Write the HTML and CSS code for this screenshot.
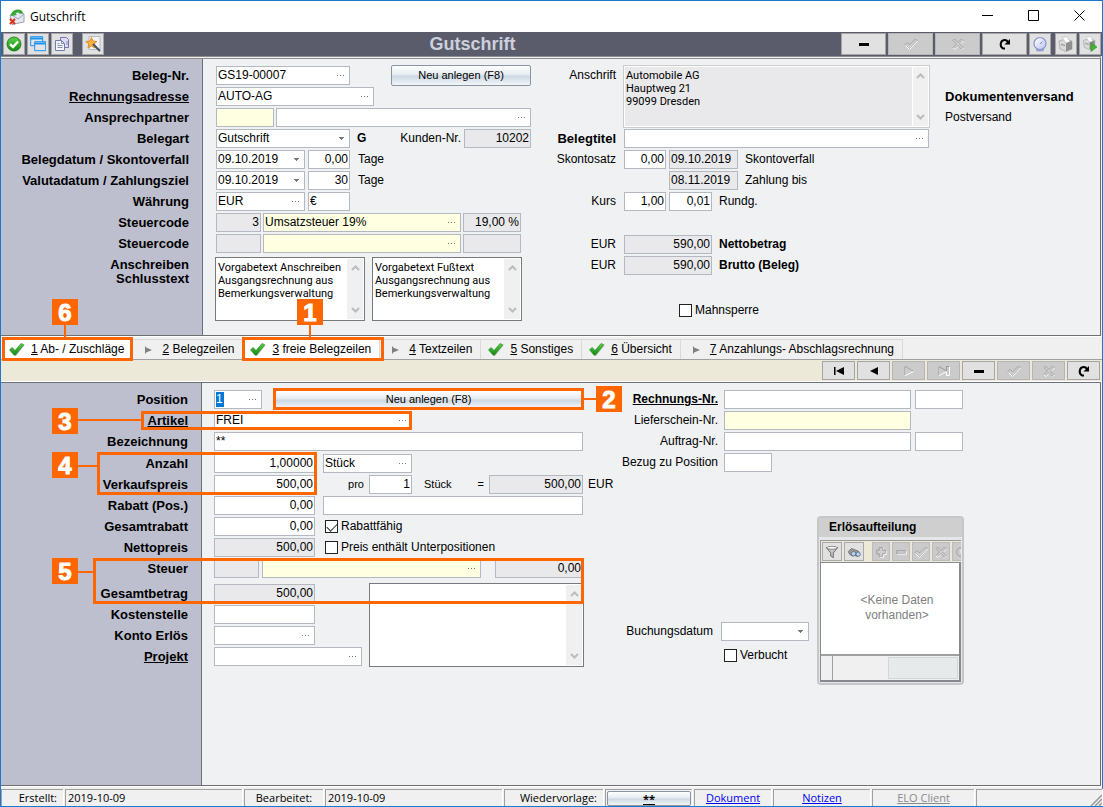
FILE: index.html
```html
<!DOCTYPE html>
<html lang="de">
<head>
<meta charset="utf-8">
<title>Gutschrift</title>
<link rel="stylesheet" href="styles.css">
</head>
<body>
<svg class="sprite" aria-hidden="true">
  <defs>
    <linearGradient id="green" x1="0" y1="0" x2="0" y2="1"><stop offset="0" stop-color="#5fd04a"/><stop offset="1" stop-color="#128a12"/></linearGradient>
    <linearGradient id="sky" x1="0" y1="0" x2="1" y2="1"><stop offset="0" stop-color="#ffffff"/><stop offset="1" stop-color="#b9c3ee"/></linearGradient>
    <symbol id="dots" viewBox="0 0 8 2"><path d="M0 0h1v1H0zM3 0h1v1H3zM6 0h1v1H6z" fill="#777"/></symbol>
    <symbol id="caret" viewBox="0 0 6 4"><path d="M0 0h5v1H4v1H3v1H2V2H1V1H0z" fill="#777"/></symbol>
    <symbol id="up" viewBox="0 0 9 6"><path d="M1 5 4.500 1.500 8 5" fill="none" stroke="#bcbcbc" stroke-width="2"/></symbol>
    <symbol id="down" viewBox="0 0 9 6"><path d="M1 1 4.500 4.500 8 1" fill="none" stroke="#bcbcbc" stroke-width="2"/></symbol>
    <symbol id="tick" viewBox="0 0 16 14"><path d="M1 7.500 3.500 5.200 6.200 8.300 12.500 1 15.500 2.500 7 13 5.500 13z" fill="#888" opacity=".5"/><path d="M.5 6.800 3.200 4.500 6 7.600 12 .5 14.800 1.700 6.500 12 5 12z" fill="url(#green)" stroke="#1b8a1b" stroke-width=".6"/></symbol>
    <symbol id="play" viewBox="0 0 16 14"><path d="M5 4l7 3-7 3z" fill="#808080"/><path d="M5.500 3.500v7" stroke="#808080"/></symbol>
    <symbol id="minus" viewBox="0 0 16 12"><path d="M3 5h10v3H3z"/></symbol>
    <symbol id="ok" viewBox="0 0 16 12"><path d="M2 6.500 4 4.500 6.500 7 12.500 1 14 2.500 6.500 11z" fill="#d0d0d0" stroke="#999" stroke-width=".8"/><path d="M2.500 7.500 6.500 11.500 14.500 3" fill="none" stroke="#fff"/></symbol>
    <symbol id="cross" viewBox="0 0 16 12"><path d="M3 2.500 4.500 1 8 4.500 11.500 1 13 2.500 9.500 6 13 9.500 11.500 11 8 7.500 4.500 11 3 9.500 6.500 6z" fill="#d0d0d0" stroke="#999" stroke-width=".8"/><path d="M13.500 3 10.500 6M13.500 10 12 11.500M8 8.500 5 11.500 3 10" fill="none" stroke="#fff"/></symbol>
    <symbol id="redo" viewBox="0 0 16 12"><path d="M8 10.500H6C2.500 8.500 3 2.500 7.500 2c1.500-.1 2.700.7 3.500 2" fill="none" stroke="#000" stroke-width="2"/><path d="M13 1v5.500H7.500z"/></symbol>
    <symbol id="first" viewBox="0 0 16 12"><path d="M3 2h1.500v8H3zM13 2v8L5 6z"/></symbol>
    <symbol id="prev" viewBox="0 0 16 12"><path d="M12 2v8L4 6z"/></symbol>
    <symbol id="next" viewBox="0 0 16 12"><path d="M4.500 2v8.500L13 6.200z" fill="none" stroke="#fff"/><path d="M4 10V1.500L12.500 6" fill="none" stroke="#999"/></symbol>
    <symbol id="last" viewBox="0 0 16 12"><path d="M3.500 2v8.500L10.500 6.500V10.500H13.500V2" fill="none" stroke="#fff"/><path d="M3 10V1.500L10.500 6V1.500H13" fill="none" stroke="#999"/></symbol>
    <symbol id="printer" viewBox="0 0 16 16"><path d="M1 5 8 3l6 2v8l-6 2.500L2 13z" fill="#d9d9d9" stroke="#999" stroke-width=".6"/><path d="M8 6.500 14 5v8l-6 2.500z" fill="#8f8f8f"/><path d="M4 1.500 9 .5l3 5-4 1.500z" fill="#fff" stroke="#aaa" stroke-width=".5"/><path d="M3 8.500l4 1" stroke="#888"/></symbol>
  </defs>
</svg>

<main class="window">
  <header class="titlebar">
    <svg class="app-icon" viewBox="0 0 16 16"><path d="M1 6 8 2l7 3v8l-12 2.500z" fill="#e4e6f2" stroke="#8c8fa3" stroke-width=".8"/><path d="M3 6 9 10 15 5" fill="none" stroke="#8c8fa3" stroke-width=".8"/><path d="M2 7C2 3 5 .5 9 .5c3 0 4.500 1.500 5 3.500l-3 1C10 3 8 3 6.500 4.500L8 6z" fill="#35a835"/><path d="M1 10l5 5M6 10l-5 5" stroke="#d8341c" stroke-width="2.200"/></svg>
    <h1 class="caption">Gutschrift</h1>
    <div class="window-buttons">
      <button aria-label="Minimieren"><svg viewBox="0 0 11 11"><path d="M0 5.500h11" stroke="#000"/></svg></button>
      <button aria-label="Maximieren"><svg viewBox="0 0 11 11"><path d="M.5.500h10v10H.5z" fill="none" stroke="#000"/></svg></button>
      <button aria-label="Schließen"><svg viewBox="0 0 11 11"><path d="M.5.500l10 10M10.500.500l-10 10" stroke="#000"/></svg></button>
    </div>
  </header>

  <div class="toolbar">
    <button class="tool" aria-label="OK"><svg viewBox="0 0 16 16"><circle cx="8" cy="8" r="7" fill="url(#green)" stroke="#147014" stroke-width=".8"/><path d="M4 8.200 7 11 12 5.500" fill="none" stroke="#fff" stroke-width="2.400"/></svg></button>
    <button class="tool" aria-label="Fenster"><svg viewBox="0 0 16 16"><path d="M.7.700h12v9H.7z" fill="#e4e4e6" stroke="#1b93f0"/><path d="M.5 2.500h12" stroke="#1b93f0" stroke-width="2"/><path d="M4.700 5.700h11v9h-11z" fill="#e4e4e6" stroke="#1b93f0"/><path d="M4.500 7.500h11" stroke="#1b93f0" stroke-width="2"/></svg></button>
    <button class="tool" aria-label="Kopieren"><svg viewBox="0 0 16 16"><path d="M6.500 1.500h6l2 2v8h-8z" fill="#dcdcf6" stroke="#7d72ab"/><path d="M1.500 4.500h6l3 3v7h-9z" fill="#f3f5fc" stroke="#727da4"/><path d="M7.500 4.500v3h3M3.500 9.500h5M3.500 11.500h5M3.500 7.500h2M12 6h2M12 8h2" fill="none" stroke="#8590b5"/></svg></button>
    <button class="tool wizard" aria-label="Assistent"><svg viewBox="0 0 16 16"><path d="M4 .5h11v13H4z" fill="#f2f3f5" stroke="#b4bac4"/><path d="M6.500 1.500 8 5l4 .500-3 2.500.8 4L6.500 10 3 12l.8-4L.8 5.500 5 5z" fill="#f7b23b" stroke="#d9821a" stroke-width=".8"/><path d="M8 8l7 7" stroke="#45576b" stroke-width="2.200"/></svg></button>
    <div class="heading">Gutschrift</div>
    <button class="tool wide" aria-label="Löschen"><svg class="glyph"><use href="#minus"/></svg></button>
    <button class="tool wide off" disabled aria-label="Speichern"><svg class="glyph"><use href="#ok"/></svg></button>
    <button class="tool wide off" disabled aria-label="Verwerfen"><svg class="glyph"><use href="#cross"/></svg></button>
    <button class="tool wide" aria-label="Aktualisieren"><svg class="glyph"><use href="#redo"/></svg></button>
    <button class="tool" aria-label="Verlauf"><svg viewBox="0 0 16 16"><ellipse cx="8" cy="14" rx="4" ry="1.500" fill="#9aa3d0"/><circle cx="8" cy="7.500" r="6" fill="url(#sky)" stroke="#8b93cc" stroke-width="1.200"/><path d="M8 8 10.500 5.500" fill="none" stroke="#6670a8" stroke-width=".8"/></svg></button>
    <button class="tool print" aria-label="Drucken"><svg><use href="#printer"/></svg></button>
    <button class="tool" aria-label="Druck starten"><svg viewBox="0 0 16 16"><use href="#printer" width="15" height="14"/><path d="M9 7l6 4-6 4.500z" fill="#43b532" stroke="#2b8b20" stroke-width=".6"/></svg></button>
  </div>

  <section class="panel">
    <div class="labels">
      <label for="nr">Beleg-Nr.</label>
      <label for="adr"><a href="#adr">Rechnungsadresse</a></label>
      <label for="asp">Ansprechpartner</label>
      <label for="art">Belegart</label>
      <label for="bdat">Belegdatum / Skontoverfall</label>
      <label for="vdat">Valutadatum / Zahlungsziel</label>
      <label for="cur">Währung</label>
      <label for="st1">Steuercode</label>
      <label for="st2">Steuercode</label>
      <div class="double"><label for="memo1">Anschreiben</label><label for="memo2">Schlusstext</label></div>
    </div>
    <div class="content upper">
      <div class="rows voucher">
        <div class="row"><span class="field w133"><input id="nr" value="GS19-00007"><button aria-label="Suchen"><svg><use href="#dots"/></svg></button></span><button class="action end">Neu anlegen (F8)</button></div>
        <div class="row"><span class="field w158"><input id="adr" value="AUTO-AG"><button aria-label="Suchen"><svg><use href="#dots"/></svg></button></span></div>
        <div class="row g2"><span class="field w58 hint"><input id="asp"></span><span class="field grow"><input aria-label="Name"><button aria-label="Suchen"><svg><use href="#dots"/></svg></button></span></div>
        <div class="row g7"><span class="field w133"><select id="art"><option>Gutschrift</option></select><svg><use href="#caret"/></svg></span><b>G</b><label class="end" for="kd">Kunden-Nr.</label><span class="field w67 locked"><input id="kd" class="num" value="10202" readonly></span></div>
        <div class="row g3"><span class="field w89"><select id="bdat"><option>09.10.2019</option></select><svg><use href="#caret"/></svg></span><span class="field w42"><input id="bt" class="num" value="0,00"></span><label class="after" for="bt">Tage</label></div>
        <div class="row g3"><span class="field w89"><select id="vdat"><option>09.10.2019</option></select><svg><use href="#caret"/></svg></span><span class="field w42"><input id="vt" class="num" value="30"></span><label class="after" for="vt">Tage</label></div>
        <div class="row g3"><span class="field w89"><input id="cur" value="EUR"><button aria-label="Suchen"><svg><use href="#dots"/></svg></button></span><span class="field w42"><input aria-label="Symbol" value="€"></span></div>
        <div class="row g2"><span class="field w45 locked"><input id="st1" class="num" value="3" readonly></span><span class="field w198 hint"><input aria-label="Steuer" value="Umsatzsteuer 19%"><button aria-label="Suchen"><svg><use href="#dots"/></svg></button></span><span class="field w58 locked"><input aria-label="Satz" class="num" value="19,00 %" readonly></span></div>
        <div class="row g2"><span class="field w45 locked"><input id="st2" class="num" readonly></span><span class="field w198 hint"><input aria-label="Steuer"><button aria-label="Suchen"><svg><use href="#dots"/></svg></button></span><span class="field w58 locked"><input aria-label="Satz" readonly></span></div>
        <div class="memos">
          <div class="memo"><textarea id="memo1">Vorgabetext Anschreiben
Ausgangsrechnung aus
Bemerkungsverwaltung</textarea><div class="scroll"><svg><use href="#up"/></svg><svg><use href="#down"/></svg></div></div>
          <div class="memo"><textarea id="memo2">Vorgabetext Fußtext
Ausgangsrechnung aus
Bemerkungsverwaltung</textarea><div class="scroll"><svg><use href="#up"/></svg><svg><use href="#down"/></svg></div></div>
        </div>
      </div>
      <div class="rows totals">
        <div class="row address"><label class="lead" for="an">Anschrift</label><div class="memo locked"><textarea id="an" readonly>Automobile AG
Hauptweg 21
99099 Dresden</textarea><div class="scroll"><svg><use href="#up"/></svg><svg><use href="#down"/></svg></div></div></div>
        <div class="row"><label class="lead strong" for="bti">Belegtitel</label><span class="field grow"><input id="bti"><button aria-label="Suchen"><svg><use href="#dots"/></svg></button></span></div>
        <div class="row"><label class="lead" for="sk">Skontosatz</label><span class="field w42"><input id="sk" class="num" value="0,00"></span><span class="field w69 locked n3"><input id="skd" value="09.10.2019" readonly></span><label class="after" for="skd">Skontoverfall</label></div>
        <div class="row"><span class="lead"></span><span class="w42"></span><span class="field w69 locked n3"><input id="zb" value="08.11.2019" readonly></span><label class="after" for="zb">Zahlung bis</label></div>
        <div class="row"><label class="lead" for="ku">Kurs</label><span class="field w42"><input id="ku" class="num" value="1,00"></span><span class="field w43 n3"><input id="ru" class="num" value="0,01"></span><label class="after" for="ru">Rundg.</label></div>
        <div class="row far"><span class="lead">EUR</span><span class="field w88 locked"><input id="nb" class="num" value="590,00" readonly></span><label class="after bold" for="nb">Nettobetrag</label></div>
        <div class="row"><span class="lead">EUR</span><span class="field w88 locked"><input id="bb" class="num" value="590,00" readonly></span><label class="after bold" for="bb">Brutto (Beleg)</label></div>
        <div class="row dunning"><input type="checkbox" id="ms"><label for="ms">Mahnsperre</label></div>
      </div>
      <div class="rows dispatch">
        <div class="row strong">Dokumentenversand</div>
        <div class="row">Postversand</div>
      </div>
    </div>
  </section>

  <nav class="tabs">
    <button class="tab current"><svg><use href="#tick"/></svg><span><u>1</u> Ab- / Zuschläge</span></button>
    <button class="tab"><svg><use href="#play"/></svg><span><u>2</u> Belegzeilen</span></button>
    <button class="tab current"><svg><use href="#tick"/></svg><span><u>3</u> freie Belegzeilen</span></button>
    <button class="tab"><svg><use href="#play"/></svg><span><u>4</u> Textzeilen</span></button>
    <button class="tab"><svg><use href="#tick"/></svg><span><u>5</u> Sonstiges</span></button>
    <button class="tab"><svg><use href="#tick"/></svg><span><u>6</u> Übersicht</span></button>
    <button class="tab"><svg><use href="#play"/></svg><span><u>7</u> Anzahlungs- Abschlagsrechnung</span></button>
  </nav>
  <div class="navigator">
    <button class="tool" aria-label="Erster"><svg class="glyph"><use href="#first"/></svg></button>
    <button class="tool" aria-label="Voriger"><svg class="glyph"><use href="#prev"/></svg></button>
    <button class="tool off" disabled aria-label="Nächster"><svg class="glyph"><use href="#next"/></svg></button>
    <button class="tool off" disabled aria-label="Letzter"><svg class="glyph"><use href="#last"/></svg></button>
    <button class="tool" aria-label="Löschen"><svg class="glyph"><use href="#minus"/></svg></button>
    <button class="tool off" disabled aria-label="Speichern"><svg class="glyph"><use href="#ok"/></svg></button>
    <button class="tool off" disabled aria-label="Verwerfen"><svg class="glyph"><use href="#cross"/></svg></button>
    <button class="tool" aria-label="Aktualisieren"><svg class="glyph"><use href="#redo"/></svg></button>
  </div>

  <section class="panel lines">
    <div class="labels">
      <label for="pos">Position</label>
      <label for="arti"><a href="#arti">Artikel</a></label>
      <label for="bez">Bezeichnung</label>
      <label class="s1" for="anz">Anzahl</label>
      <label for="vk">Verkaufspreis</label>
      <label for="rab">Rabatt (Pos.)</label>
      <label for="ges">Gesamtrabatt</label>
      <label for="net">Nettopreis</label>
      <label for="steu">Steuer</label>
      <label class="s4" for="gb">Gesamtbetrag</label>
      <label for="ks">Kostenstelle</label>
      <label for="ke">Konto Erlös</label>
      <label for="pj"><a href="#pj">Projekt</a></label>
    </div>
    <div class="content lower">
      <div class="rows item">
        <div class="row"><span class="field w48"><input id="pos" class="picked" value="1"><button aria-label="Suchen"><svg><use href="#dots"/></svg></button></span><button class="action long">Neu anlegen (F8)</button></div>
        <div class="row"><span class="field w198"><input id="arti" value="FREI"><button aria-label="Suchen"><svg><use href="#dots"/></svg></button></span></div>
        <div class="row"><span class="field w369"><input id="bez" value="**"></span></div>
        <div class="row g8 s1"><span class="field w101"><input id="anz" class="num" value="1,00000"></span><span class="field w89"><input aria-label="Einheit" value="Stück"><button aria-label="Suchen"><svg><use href="#dots"/></svg></button></span></div>
        <div class="row"><span class="field w101"><input id="vk" class="num" value="500,00"></span><label class="per" for="pro">pro</label><span class="field w43"><input id="pro" class="num" value="1"></span><span class="unit"><span>Stück</span><span>=</span></span><span class="field w94 locked"><input aria-label="Summe" class="num" value="500,00" readonly></span><span class="currency">EUR</span></div>
        <div class="row g8"><span class="field w101"><input id="rab" class="num" value="0,00"></span><span class="field w260"><input aria-label="Rabatttext"></span></div>
        <div class="row g3"><span class="field w101"><input id="ges" class="num" value="0,00"></span><input type="checkbox" class="indent" id="rf" checked><label for="rf">Rabattfähig</label></div>
        <div class="row g3"><span class="field w101 locked"><input id="net" class="num" value="500,00" readonly></span><input type="checkbox" class="indent" id="pu"><label for="pu">Preis enthält Unterpositionen</label></div>
        <div class="row g3 w369"><span class="field w45 locked"><input id="steu" readonly></span><span class="field w219 hint"><input aria-label="Steuertext"><button aria-label="Suchen"><svg><use href="#dots"/></svg></button></span><span class="field w88 locked end"><input aria-label="Steuerbetrag" class="num" value="0,00" readonly></span></div>
        <div class="closing s4">
          <div class="rows">
            <div class="row"><span class="field w101 locked"><input id="gb" class="num" value="500,00" readonly></span></div>
            <div class="row"><span class="field w101"><input id="ks"></span></div>
            <div class="row"><span class="field w101"><input id="ke"><button aria-label="Suchen"><svg><use href="#dots"/></svg></button></span></div>
            <div class="row"><span class="field w148"><input id="pj"><button aria-label="Suchen"><svg><use href="#dots"/></svg></button></span></div>
          </div>
          <div class="memo"><textarea aria-label="Bemerkung"></textarea><div class="scroll"><svg><use href="#up"/></svg><svg><use href="#down"/></svg></div></div>
        </div>
      </div>
      <div class="rows refs">
        <div class="row"><label class="lead bold" for="rn"><a href="#rn">Rechnungs-Nr.</a></label><span class="field w187"><input id="rn"></span><span class="field w48"><input aria-label="Position"></span></div>
        <div class="row"><label class="lead" for="ln">Lieferschein-Nr.</label><span class="field w187 hint"><input id="ln"></span></div>
        <div class="row"><label class="lead" for="an2">Auftrag-Nr.</label><span class="field w187"><input id="an2"></span><span class="field w48"><input aria-label="Position"></span></div>
        <div class="row"><label class="lead" for="bp">Bezug zu Position</label><span class="field w48"><input id="bp"></span></div>
        <div class="booking">
          <div class="posted">
            <div class="row g8"><label class="end" for="bd">Buchungsdatum</label><span class="field w88"><select id="bd"><option></option></select><svg><use href="#caret"/></svg></span></div>
            <div class="row g3"><input type="checkbox" id="vb"><label for="vb">Verbucht</label></div>
          </div>
          <section class="split">
            <h2>Erlösaufteilung</h2>
            <div class="split-tools">
              <button class="mini" aria-label="Filter"><svg viewBox="0 0 16 16"><path d="M1.500 3h13L9.500 9v5.500l-3-2V9z" fill="#c4c4c4" stroke="#555" stroke-width=".9"/><ellipse cx="8" cy="3.200" rx="6" ry="1.600" fill="#fff" stroke="#666" stroke-width=".8"/></svg></button>
              <button class="mini" aria-label="Suchen"><svg viewBox="0 0 16 16"><path d="M1.500 7.500 5 4l8 3 2 4-3 2-3-1-3 .5-3-2z" fill="#9a9a9a" stroke="#555" stroke-width=".8"/><circle cx="7.500" cy="10" r="2.500" fill="#b5d9f5" stroke="#456" stroke-width=".7"/><circle cx="12.800" cy="10.500" r="2.400" fill="#b5d9f5" stroke="#456" stroke-width=".7"/></svg></button>
              <button class="mini off first" disabled aria-label="Neu"><svg viewBox="0 0 16 16"><path d="M6 3h4v3h3v4h-3v3H6v-3H3V6h3z" fill="#d0d0d0" stroke="#999"/><path d="M11 3v2M14 7v4h-3v3H7" fill="none" stroke="#fff"/></svg></button>
              <button class="mini off" disabled aria-label="Löschen"><svg viewBox="0 0 16 16"><path d="M3 6.500h10v3H3z" fill="#d0d0d0" stroke="#999"/><path d="M14 7v3.500H4" fill="none" stroke="#fff"/></svg></button>
              <button class="mini off" disabled aria-label="Speichern"><svg><use href="#ok"/></svg></button>
              <button class="mini off" disabled aria-label="Verwerfen"><svg><use href="#cross"/></svg></button>
              <button class="mini off" disabled aria-label="Aktualisieren"><svg viewBox="0 0 16 16"><circle cx="8" cy="8" r="5" fill="none" stroke="#999"/><path d="M8 5v4h3" fill="none" stroke="#fff"/></svg></button>
            </div>
            <div class="split-body"><p>&lt;Keine Daten vorhanden&gt;</p><div class="split-foot"><span></span><i></i></div></div>
          </section>
        </div>
      </div>
    </div>
  </section>

  <footer class="status">
    <span class="cell c62 right">Erstellt:</span>
    <span class="cell c177">2019-10-09</span>
    <span class="cell c79 mid">Bearbeitet:</span>
    <span class="cell c177">2019-10-09</span>
    <span class="cell c99 right">Wiedervorlage:</span>
    <span class="cell c87 press"><button class="action"><u>**</u></button></span>
    <span class="cell c77 mid"><a href="#dokument">Dokument</a></span>
    <span class="cell c97 mid"><a href="#notizen">Notizen</a></span>
    <span class="cell c102 mid"><a class="dim" href="#elo">ELO Client</a></span>
    <span class="cell rest"><svg viewBox="0 0 12 12"><path d="M1 12 12 1M5 12l7-7M9 12l3-3" stroke="#999" stroke-width="1.500"/></svg></span>
  </footer>

  <div class="frame f6"></div><div class="stem v s6"></div><div class="badge b6">6</div>
  <div class="frame f1"></div><div class="stem v s-1"></div><div class="badge b1">1</div>
  <div class="frame f2"></div><div class="stem h s-2"></div><div class="badge b2">2</div>
  <div class="frame f3"></div><div class="stem h s-3"></div><div class="badge b3">3</div>
  <div class="frame f4"></div><div class="stem h s-4"></div><div class="badge b4">4</div>
  <div class="frame f5"></div><div class="stem h s-5"></div><div class="badge b5">5</div>
</main>
</body>
</html>
```
FILE: styles.css
```css
* { box-sizing: border-box; }
body { margin: 0; background: #f0f0f0; color: #000; font: 12px/19px "Liberation Sans", Arial, sans-serif; }
button, input, select, textarea { font: inherit; color: inherit; margin: 0; }
button { padding: 0; }
a { color: inherit; }
.sprite { position: absolute; width: 0; height: 0; }

.window { position: relative; display: flex; flex-direction: column; min-height: 100vh; min-width: 1103px; border: 1px solid #1979ca; background: #f0f0f0; }

/* title bar */
.titlebar { display: flex; align-items: center; height: 31px; padding: 0 17px 0 8px; background: #fff; }
.app-icon { width: 16px; height: 16px; }
.caption { flex: 1; margin: 0 0 0 5px; font: 12px/16px "Open Sans", sans-serif; }
.window-buttons { display: flex; gap: 35px; padding-bottom: 2px; }
.window-buttons button { display: flex; border: 0; background: none; }
.window-buttons svg { width: 11px; height: 11px; }

/* toolbars */
.toolbar { display: flex; align-items: center; gap: 2px; height: 24px; padding: 0 1px 0 2px; background: #5a5c6c; }
.tool { display: flex; align-items: center; justify-content: center; flex: none; width: 22px; height: 22px; border: 1px solid #a5a5a5; background: #e1e1e1; }
.tool svg { width: 16px; height: 16px; }
.tool .glyph { width: 16px; height: 12px; }
.tool.wide { width: 45px; }
.tool.off { background: #cbcbcb; border-color: #b5b5b5; }
.wizard { margin-left: 7px; }
.print { margin-left: 2px; }
.heading { flex: 1; text-align: center; color: #ccd0dc; font-weight: bold; font-size: 18px; }
.navigator { display: flex; justify-content: flex-end; gap: 2px; height: 22px; padding: 1px 2px; background: #ece9d8; border-bottom: 1px solid #fff; }
.navigator .tool { width: 33px; height: 19px; }

/* panels */
.panel { display: flex; margin-right: 1px; border-right: 1px solid #6d6f73; border-bottom: 1px solid #6d6f73; background: #eff1f3; border-top: 3px double #8d8d8d; }
.panel.lines { flex: 1; border-top: 1px solid #6d7078; }
.labels { display: flex; flex-direction: column; gap: 2px; width: 202px; flex: none; padding: 7px 13px 0 0; background: #bdbfce; border-right: 1px solid #6d6f73; text-align: right; font-weight: bold; font-size: 13px; }
.lines .labels { width: 201px; }
.double { display: flex; flex-direction: column; margin-top: 3px; line-height: 14px; }
.content { display: flex; flex: 1; align-items: flex-start; }
.upper { padding: 7px 0 15px 13px; }
.lower { padding: 7px 0 15px 12px; }
.rows { display: flex; flex-direction: column; gap: 2px; }
.row { display: flex; align-items: center; height: 19px; white-space: nowrap; }
.voucher { width: 315px; flex: none; }
.totals { width: 387px; margin-left: 11px; flex: none; }
.dispatch { margin: 21px 0 0 16px; }
.item { width: 403px; flex: none; }
.refs { width: 347px; flex: none; }
.g2 { gap: 2px; }
.g3 { gap: 3px; }
.g7 { gap: 7px; }
.g8 { gap: 8px; }
.g7 .end + .field { margin-left: -4px; }
.end { margin-left: auto; }
.s1 { margin-top: 1px; }
.s4 { margin-top: 4px; }
.far { margin-top: 22px; }
.strong { font-weight: bold; font-size: 13px; }
.bold { font-weight: bold; }
.after { margin-left: 7px; }
.g3 .after { margin-left: 5px; }
.n3 { margin-left: 3px; }
.lead { width: 74px; margin-right: 8px; flex: none; text-align: right; }
.refs .lead { width: 101px; margin-right: 6px; }
.refs .field + .field { margin-left: 4px; }

/* fields */
.field { display: flex; align-items: center; flex: none; height: 19px; border: 1px solid #b4b9c1; background: #fff; }
.field input, .field select { flex: 1; min-width: 0; width: 100%; height: 17px; padding: 0 1px; border: 0; outline: 0; background: none; appearance: none; line-height: 17px; }
.field button { display: flex; border: 0; background: none; padding: 0 4px 0 2px; }
.field svg { width: 8px; height: 2px; flex: none; }
.field select + svg { width: 6px; height: 4px; margin-right: 4px; }
.field .num { text-align: right; }
.field .picked { color: #fff; background: linear-gradient(#0078d7, #0078d7) 1px center / 8px 15px no-repeat; }
.locked { background: #e9e9eb; }
.hint { background: #ffffe1; }
.field.grow { flex: 1; }
.w42 { width: 42px; }
.w43 { width: 43px; }
.w45 { width: 45px; }
.w48 { width: 48px; }
.w58 { width: 58px; }
.w67 { width: 67px; }
.w69 { width: 69px; }
.w88 { width: 88px; }
.w89 { width: 89px; }
.w94 { width: 94px; }
.w101 { width: 101px; }
.w133 { width: 134px; }
.w148 { width: 148px; }
.w158 { width: 158px; }
.w187 { width: 187px; }
.w198 { width: 198px; }
.w219 { width: 219px; }
.w260 { width: 260px; }
.w369 { width: 369px; }

.action { width: 140px; height: 21px; flex: none; border: 1px solid #8a94a2; border-radius: 2px; background: linear-gradient(#fff, #e4eaf0 48%, #cbd7e1 52%, #f3f6f9); font-size: 11px; line-height: 17px; }
.action.long { width: 309px; height: 19px; margin-left: 12px; }

input[type="checkbox"] { appearance: none; width: 13px; height: 13px; flex: none; border: 1px solid #222; background: #fff; }
input[type="checkbox"]:checked::before { content: ""; display: block; width: 9px; height: 5px; margin: 2px 1px; border: solid #333; border-width: 0 0 1px 1px; transform: rotate(-45deg); }
.indent { margin-left: 7px; }
.dunning { gap: 3px; margin-top: 24px; padding-left: 137px; }

.memo { display: flex; flex: 1; padding: 1px; background: #fff; box-shadow: 0 0 0 1px #77797c; }
.memo textarea { flex: 1; min-width: 0; border: 0; padding: 2px 1px; resize: none; overflow: hidden; outline: 0; background: none; font: 11px/13px Roboto, Tahoma, sans-serif; }
.scroll { display: flex; flex-direction: column; justify-content: space-between; align-items: center; width: 16px; padding: 6px 0; background: #f0f0f0; }
.scroll svg { width: 9px; height: 6px; }
.memos { display: flex; gap: 9px; height: 62px; margin-top: 3px; margin-right: 10px; }
.address { height: 61px; align-items: stretch; }
.memo.locked { background: #e9e9eb; border: 1px solid #fff; box-shadow: 0 0 0 1px #ccc; padding: 0; }
.locked .scroll { border-left: 1px solid #fff; }

.per { width: 54px; padding-right: 5px; text-align: right; font-size: 11px; }
.unit { display: flex; justify-content: space-between; width: 77px; padding: 0 5px 0 12px; font-size: 11px; }
.currency { margin-left: 5px; }
.closing { display: flex; gap: 8px; width: 369px; }

/* booking and revenue split */
.booking { display: flex; gap: 8px; margin-top: 42px; }
.posted { display: flex; flex-direction: column; flex: none; gap: 5px; width: 192px; margin-top: 106px; }
.posted .row + .row { padding-left: 107px; }
.split { flex: 1; min-width: 0; padding: 0 1px 1px; border: 2px solid #c4c6c8; border-radius: 4px; background: #e6e7e8; }
.split h2 { margin: 0 -1px 3px; padding-left: 10px; background: #cfcfcf; font-size: 12px; line-height: 19px; }
.split-tools { display: flex; gap: 2px; height: 22px; padding: 1px; overflow: hidden; background: #ece9d8; border-top: 1px solid #999; border-left: 1px solid #999; }
.mini { display: flex; align-items: center; justify-content: center; width: 20px; height: 19px; flex: none; border: 1px solid #a9a9a9; background: #e1e1e1; }
.mini svg { width: 16px; height: 14px; flex: none; }
.mini.off { width: 18px; background: #cbcbcb; border-color: #bbb; }
.mini.first { margin-left: 6px; }
.split-body { height: 120px; display: flex; flex-direction: column; border: 1px solid #868a90; border-right-width: 2px; border-bottom-width: 2px; background: #fff; }
.split-body p { flex: 1; margin: 0; padding: 30px 22px 0 36px; text-align: center; line-height: 15px; color: #808080; }
.split-foot { display: flex; justify-content: space-between; height: 26px; border-top: 2px solid #a0a0a0; background: #f0f0f0; }
.split-foot span { width: 12px; border-right: 1px solid #a0a0a0; }
.split-foot i { width: 70px; margin: 1px 1px; border: 1px solid #d3d6d8; background: #e6eaea; }

/* tabs */
.tabs { display: flex; height: 24px; padding: 2px 0 0 1px; border-top: 1px solid #fff; border-bottom: 1px solid #a0a0a0; }
.tab { display: flex; align-items: center; gap: 6px; padding: 0 8px 0 7px; border: solid #d9d9d9; border-width: 1px 1px 0 0; background: #f0f0f0; white-space: nowrap; }
.tab svg { width: 16px; height: 14px; flex: none; }
.tab.current { background: #fff; }

/* status bar */
.status { display: flex; gap: 2px; height: 20px; padding-top: 2px; border-top: 1px solid #fff; font: 11px/16px "Open Sans", sans-serif; }
.cell { flex: none; padding: 0 2px; border: solid #a0a0a0; border-width: 1px 0 0 1px; box-shadow: 1px 0 #fff; }
.cell.right { text-align: right; padding-right: 6px; }
.cell.mid { text-align: center; }
.cell a { color: #0000f0; }
.cell .dim { color: #8a8a8a; }
.c62 { width: 62px; }
.c77 { width: 77px; }
.c79 { width: 79px; }
.c87 { width: 87px; }
.c97 { width: 97px; }
.c99 { width: 99px; }
.c102 { width: 102px; }
.c177 { width: 177px; }
.press { display: flex; padding: 1px; }
.press .action { width: 100%; height: 15px; line-height: 12px; font-weight: bold; }
.cell.rest { flex: 1; display: flex; justify-content: flex-end; align-items: flex-end; padding: 0; }
.rest svg { width: 12px; height: 12px; }

/* callouts lying over the form */
.frame, .stem, .badge { position: absolute; pointer-events: none; }
.frame { border: 3px solid #f60; }
.stem { background: #f60; }
.v { width: 2px; height: 12px; top: 324px; }
.h { height: 2px; }
.badge { width: 26px; height: 26px; background: #f60; color: #fff; font-weight: bold; font-size: 24px; line-height: 27px; text-align: center; -webkit-text-stroke: 1px #fff; }
.f6 { left: 1px; top: 336px; width: 131px; height: 24px; }
.s6 { left: 63px; }
.b6 { left: 51px; top: 298px; }
.f1 { left: 241px; top: 336px; width: 142px; height: 24px; }
.s-1 { left: 308px; }
.b1 { left: 296px; top: 298px; }
.f2 { left: 272px; top: 387px; width: 311px; height: 22px; }
.s-2 { left: 583px; top: 397px; width: 12px; }
.b2 { left: 595px; top: 385px; }
.f3 { left: 140px; top: 410px; width: 271px; height: 19px; }
.s-3 { left: 77px; top: 418px; width: 63px; }
.b3 { left: 51px; top: 407px; }
.f4 { left: 96px; top: 451px; width: 220px; height: 43px; }
.s-4 { left: 77px; top: 464px; width: 19px; }
.b4 { left: 51px; top: 451px; }
.f5 { left: 92px; top: 557px; width: 491px; height: 46px; }
.s-5 { left: 77px; top: 570px; width: 15px; }
.b5 { left: 51px; top: 557px; }
```
